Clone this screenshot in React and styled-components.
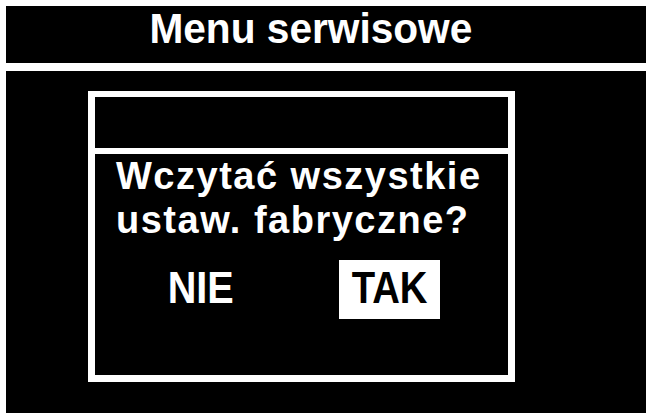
import React from 'react';
import styled, { createGlobalStyle } from 'styled-components';

const GlobalStyle = createGlobalStyle`
	html, body {
		margin: 0;
		padding: 0;
		background: #fff;
	}
	body {
		font-family: "Liberation Sans", Arial, sans-serif;
		font-weight: 700;
		color: #fff;
	}
`

const Screen = styled.div`
	box-sizing: border-box;
	width: 651px;
	height: 419px;
	padding: 6px 5px 6px 6px;
	display: flex;
	flex-direction: column;
	gap: 8px;
	background: #fff;
`

const Header = styled.div`
	height: 57px;
	flex-shrink: 0;
	background: #000;
	display: flex;
	justify-content: center;
	padding-right: 31px;
	font-size: 43px;
	line-height: 44px;
`

// the display font is a touch narrower than Arial
const Narrow = styled.span`
	display: inline-block;
	transform: scaleX(${p => p.$x});
`

const Body = styled.div`
	flex: 1;
	background: #000;
	padding: 20px 0 0 82px;
`

const Dialog = styled.div`
	box-sizing: border-box;
	width: 427px;
	height: 291px;
	border: 7px solid #fff;
	border-top-width: 6px;
	display: flex;
	flex-direction: column;
`

const DialogTitle = styled.div`
	height: 51px;
	border-bottom: 6px solid #fff;
`

const Message = styled.div`
	padding-left: 21px;
	font-size: 38px;
	line-height: 44px;
	letter-spacing: 1.5px;
`

const Choices = styled.div`
	margin-top: 18px;
	display: grid;
	grid-template-columns: 211px 167px;
	justify-items: center;
`

const Choice = styled.span`
	width: 101px;
	padding-bottom: 3px;
	text-align: center;
	font-size: 44px;
	line-height: 56px;
	background: ${p => (p.$selected ? '#fff' : 'transparent')};
	color: ${p => (p.$selected ? '#000' : '#fff')};
`

export default function App() {
	return (
		<>
			<GlobalStyle />
			<Screen>
				<Header>
					<Narrow $x={0.945}>Menu serwisowe</Narrow>
				</Header>
				<Body>
					<Dialog>
						<DialogTitle />
						<Message>
							Wczytać wszystkie<br />
							ustaw. fabryczne?
						</Message>
						<Choices>
							<Choice><Narrow $x={0.9}>NIE</Narrow></Choice>
							<Choice $selected><Narrow $x={0.87}>TAK</Narrow></Choice>
						</Choices>
					</Dialog>
				</Body>
			</Screen>
		</>
	);
}
